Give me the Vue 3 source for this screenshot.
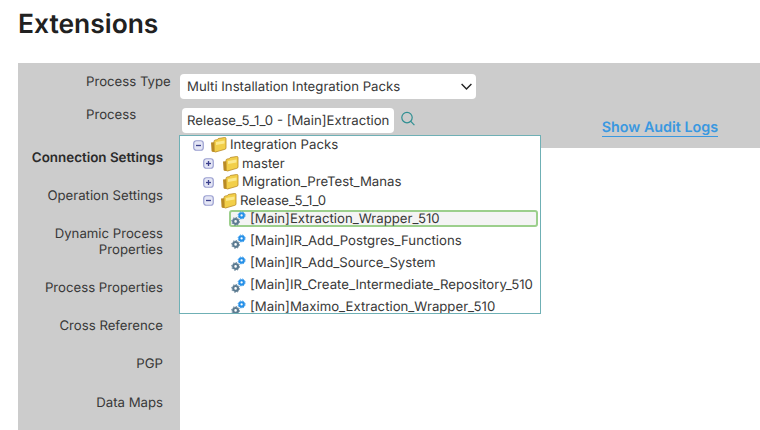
<script setup>
const sideItems = [
  { label: 'Connection Settings', bold: true, height: 38 },
  { label: 'Operation Settings', height: 38 },
  { label: 'Dynamic Process Properties', height: 54 },
  { label: 'Process Properties', height: 38 },
  { label: 'Cross Reference', height: 38 },
  { label: 'PGP', height: 38 },
  { label: 'Data Maps', height: 39 }
]
const folders = [
  { name: 'Integration Packs', open: true, depth: 0 },
  { name: 'master', open: false, depth: 1 },
  { name: 'Migration_PreTest_Manas', open: false, depth: 1 },
  { name: 'Release_5_1_0', open: true, depth: 2 }
]
const leaves = [
  { name: '[Main]Extraction_Wrapper_510', active: true },
  { name: '[Main]IR_Add_Postgres_Functions' },
  { name: '[Main]IR_Add_Source_System' },
  { name: '[Main]IR_Create_Intermediate_Repository_510' },
  { name: '[Main]Maximo_Extraction_Wrapper_510' }
]
</script>

<template>
  <div class="page">
    <h1 class="title">Extensions</h1>
    <div class="panel">
      <aside class="side">
        <div class="field-label first">Process Type</div>
        <div class="field-label second">Process</div>
        <div
          v-for="item in sideItems"
          :key="item.label"
          class="side-item"
          :class="{ bold: item.bold }"
          :style="{ height: item.height + 'px' }"
        >{{ item.label }}</div>
      </aside>
      <main class="main">
        <div class="band">
          <div class="controls">
            <div class="select">
              <span>Multi Installation Integration Packs</span>
              <svg class="chevron" width="11" height="7" viewBox="0 0 11 7" fill="none">
                <path d="M.6 1l4.9 4.9L10.4 1" stroke="#222" stroke-width="1.4" />
              </svg>
            </div>
            <div class="process-row">
              <div class="input">Release_5_1_0 - [Main]Extraction</div>
              <svg class="search" width="16" height="16" viewBox="0 0 16 16" fill="none">
                <circle cx="7" cy="6.6" r="5.2" stroke="#2f8f92" stroke-width="1.2" />
                <path d="M10.8 10.4l3.6 3.8" stroke="#2f8f92" stroke-width="1.2" />
              </svg>
            </div>
          </div>
          <a class="audit">Show Audit Logs</a>
        </div>

        <div class="tree">
          <div
            v-for="f in folders"
            :key="f.name"
            class="folder-row"
            :class="'depth-' + f.depth"
          >
            <svg class="toggle" width="11" height="11" viewBox="0 0 11 11">
              <rect x="0.75" y="0.75" width="9.5" height="9.5" rx="2.5" fill="#e4e6f5" stroke="#9a9fd0" stroke-width="1.2" />
              <path d="M3 5.5h5" stroke="#3c418c" stroke-width="1.3" />
              <path v-if="!f.open" d="M5.5 3v5" stroke="#3c418c" stroke-width="1.3" />
            </svg>
            <svg class="folder" width="17" height="16" viewBox="0 0 17 16">
              <path d="M1 5.5l5-.5 1 9.6-4 .4c-1 0-1.4-.6-1.5-1.4z" fill="#b98a24" />
              <path d="M4 4.4c0-.8.5-1.3 1.2-1.4l2.2-.3.8-1.2 6.5-1c.8-.1 1.3.3 1.3 1.1v9.3c0 .8-.4 1.2-1.1 1.4L5.5 15c-.8.1-1.2-.3-1.3-1z" fill="#f2cf4a" stroke="#b98a24" stroke-width="0.8" />
              <path d="M6 5l8.5-1.4v3L6 8z" fill="#fbe98e" />
            </svg>
            <span>{{ f.name }}</span>
          </div>
          <div
            v-for="l in leaves"
            :key="l.name"
            class="leaf-row"
            :class="{ active: l.active }"
          >
            <svg class="gears" width="15" height="15" viewBox="0 0 15 15">
              <circle cx="4.6" cy="10.4" r="2.4" fill="none" stroke="#5b7a90" stroke-width="2.2" />
              <circle cx="4.6" cy="10.4" r="3.9" fill="none" stroke="#5b7a90" stroke-width="1" stroke-dasharray="1.5 1.5" />
              <circle cx="10.6" cy="4.4" r="2.2" fill="none" stroke="#2590e8" stroke-width="2.1" />
              <circle cx="10.6" cy="4.4" r="3.5" fill="none" stroke="#2590e8" stroke-width="0.9" stroke-dasharray="1.4 1.4" />
            </svg>
            <span>{{ l.name }}</span>
          </div>
        </div>
      </main>
    </div>
  </div>
</template>

<style>
html, body { margin: 0; background: #fff; }
</style>

<style scoped>
.page {
  width: 760px;
  height: 430px;
  overflow: hidden;
  font-family: Inter, "Liberation Sans", sans-serif;
  color: #383838;
  font-size: 13.2px;
  text-rendering: geometricPrecision;
}
.title {
  margin: 0;
  padding: 8px 0 0 18px;
  height: 63px;
  box-sizing: border-box;
  font-size: 26.4px;
  line-height: 32px;
  font-weight: 600;
  color: #212121;
}
.panel {
  display: grid;
  grid-template-columns: 162px 1fr;
  margin-left: 18px;
  height: 367px;
}
.side {
  background: #ccc;
  padding-right: 17px;
  box-sizing: border-box;
  overflow: hidden;
}
.field-label {
  line-height: 18px;
  padding-left: 68px;
  white-space: nowrap;
}
.first { padding-top: 10px; }
.second { padding-top: 15px; }
.side-item {
  display: flex;
  align-items: center;
  justify-content: flex-end;
  text-align: right;
  line-height: 16px;
}
.bold {
  font-size: 13.4px;
  font-weight: 600;
  color: #2a2a2a;
  margin-top: 15px;
}
.main { position: relative; }
.band {
  background: #ccc;
  height: 85px;
  display: flex;
  justify-content: space-between;
}
.controls { padding-top: 11px; width: 300px; }
.select {
  width: 296px;
  height: 25px;
  background: #fff;
  border-radius: 4px;
  display: flex;
  align-items: center;
  justify-content: space-between;
  padding: 0 4px 0 7px;
  box-sizing: border-box;
}
.process-row {
  display: flex;
  align-items: center;
  gap: 6px;
  margin: 9px 0 0 2px;
}
.input {
  width: 212px;
  height: 25px;
  line-height: 26px;
  padding-left: 5px;
  box-sizing: border-box;
  background: #fff;
  border-radius: 4px;
  white-space: nowrap;
  overflow: hidden;
}
.search { margin-top: -4px; }
.audit {
  margin: 56px 42px 0 0;
  height: 17px;
  line-height: 18px;
  font-weight: 600;
  color: #3a98e0;
  border-bottom: 1px solid #3a98e0;
  font-size: 14.3px;
}
.tree {
  position: absolute;
  left: -1px;
  top: 72px;
  width: 362px;
  height: 179px;
  box-sizing: border-box;
  background: #fff;
  border: 1px solid #6fb0b5;
  overflow: hidden;
}
.folder-row {
  display: flex;
  align-items: center;
  height: 18.5px;
  white-space: nowrap;
}
.folder-row .toggle { margin-right: 6px; flex: none; }
.folder-row .folder { margin-right: 3px; flex: none; }
.depth-0 { padding-left: 13px; }
.depth-1 { padding-left: 23px; }
.depth-1 .toggle { margin-right: 8px; }
.depth-2 { padding-left: 23px; }
.leaf-row {
  display: flex;
  align-items: center;
  gap: 4px;
  height: 22px;
  margin-left: 49px;
  margin-right: 2px;
  box-sizing: border-box;
  border: 1px solid transparent;
  white-space: nowrap;
}
.leaf-row .gears { flex: none; margin-left: 1px; }
.active {
  height: 17px;
  margin-bottom: 3px;
  background: #f4f4f4;
  border: 2px solid #9ccf8c;
  border-radius: 3px;
}
.active .gears { margin-left: 0; }
</style>
